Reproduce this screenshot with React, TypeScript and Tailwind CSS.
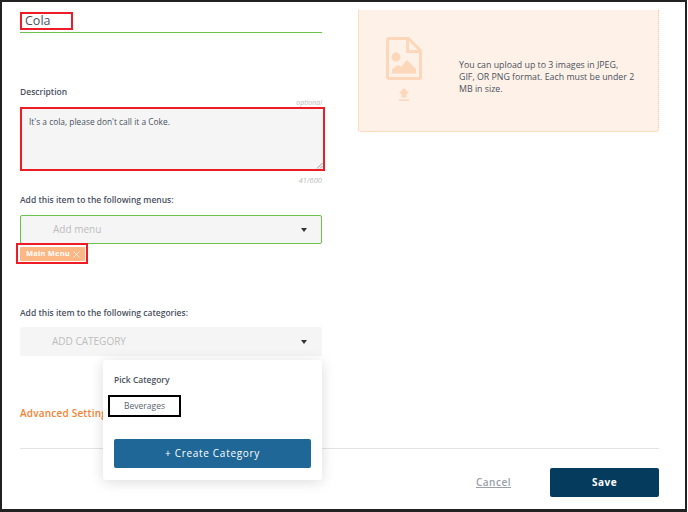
export default function App() {
  return (
    <div className="relative h-[512px] w-[688px] overflow-hidden bg-white font-['Open_Sans',sans-serif] text-[#4a5160]">
      <div className="h-[512px] w-[687px] border-x-2 border-b-[3px] border-t-2 border-[#222]">
        <div className="flex gap-[36px] pl-[18px]">
          {/* left column */}
          <div className="flex w-[302px] flex-col">
            <div className="mt-[10px] h-[21px] border-b border-[#6cc24a]">
              <div className="h-[18px] w-[53px] border-2 border-[#ee1c25] pl-[3px] text-[12.5px] leading-[14px]">Cola</div>
            </div>
            <div className="mt-[53px] text-[8.5px] font-semibold leading-[12px]">Description</div>
            <div className="text-right text-[7px] italic leading-[9px] text-[#bbb]">optional</div>
            <div className="relative h-[64px] w-[305px] border-2 border-[#ee1c25] bg-[#f5f5f5] px-[7px] py-[6px] text-[8.4px] leading-[14px]">
              It's a cola, please don't call it a Coke.
              <svg className="absolute bottom-0 right-0 h-[7px] w-[7px]" viewBox="0 0 7 7" stroke="#777" strokeWidth="0.7">
                <path d="M1 6.5 6.5 1M4 6.5 6.5 4" />
              </svg>
            </div>
            <div className="mt-[5px] text-right text-[7.5px] italic leading-[9px] text-[#bbb]">41/600</div>
            <div className="mt-[8px] text-[8.5px] font-semibold leading-[14px]">Add this item to the following menus:</div>
            <div className="mt-[8px] flex h-[29px] items-center justify-between rounded-[2px] border border-[#6cc24a] bg-[#f5f5f5] pl-[32px] pr-[14px] text-[10px] text-[#bdbdbd]">
              <span>Add menu</span>
              <Caret />
            </div>
            <div className="relative mt-[3px] flex h-[14px] w-[65px] items-center justify-between rounded-[1px] bg-[#fdb784] pl-[6px] pr-[5px] text-[7.5px] font-bold tracking-[0.2px] text-white">
              <span>Main Menu</span>
              <svg className="h-[7px] w-[7px]" viewBox="0 0 7 7" stroke="white" strokeWidth="0.8" fill="none">
                <path d="M0.5 0.5 6.5 6.5M6.5 0.5 0.5 6.5" />
              </svg>
              <div className="absolute -left-[4px] -top-[4px] h-[21px] w-[72px] border-2 border-[#ee1c25]" />
            </div>
            <div className="mt-[45px] text-[8.5px] font-semibold leading-[14px]">Add this item to the following categories:</div>
            <div className="mt-[7px] flex h-[29px] items-center justify-between rounded-[2px] bg-[#f5f5f5] pl-[32px] pr-[15px] text-[10px] text-[#bdbdbd]">
              <span>ADD CATEGORY</span>
              <Caret />
            </div>
            <div className="mt-[50px] text-[10px] font-semibold leading-[14px] tracking-[0.2px] text-[#f58233]">Advanced Settings</div>
          </div>
          {/* right column */}
          <div className="mt-[8px] flex h-[122px] w-[301px] items-center rounded-b-[3px] border-x border-b border-dotted border-[#fcc99c] bg-[#fef1e8] pl-[27px]">
            <div className="mb-[4px] flex w-[36px] flex-col items-center">
              <svg className="h-[43px] w-[36px]" viewBox="0 0 36 43" fill="#fdd7b9">
                <path fillRule="evenodd" d="M3 0H23L36 13V40a3 3 0 0 1-3 3H3a3 3 0 0 1-3-3V3a3 3 0 0 1 3-3ZM3 3V40H33V16H20V3ZM23 4V13H32Z" />
                <circle cx="10" cy="20" r="4.5" />
                <path d="M6 36.5V32L12 28 15 30 21 23 30 32V36.5Z" />
              </svg>
              <svg className="mt-[8px] h-[13px] w-[10px]" viewBox="0 0 10 13" fill="#fdd7b9">
                <path d="M5 0 10 5.5H7.5V9.5H2.5V5.5H0ZM0 11.5H10V13H0Z" />
              </svg>
            </div>
            <p className="ml-[37px] mt-[12px] whitespace-nowrap text-[8.8px] leading-[12px]">
              You can upload up to 3 images in JPEG,
              <br />
              GIF, OR PNG format. Each must be under 2
              <br />
              MB in size.
            </p>
          </div>
        </div>
        <div className="ml-[18px] mt-[28px] w-[639px] border-t border-[#e3e3e3]" />
        <div className="mr-[26px] mt-[19px] flex items-center justify-end">
          <span className="mr-[39px] text-[10px] font-semibold tracking-[0.5px] text-[#9a9fa8] underline">Cancel</span>
          <div className="flex h-[29px] w-[109px] items-center justify-center rounded-[2px] bg-[#053c5e] text-[10px] font-bold tracking-[0.5px] text-white">Save</div>
        </div>
      </div>
      {/* popup */}
      <div className="absolute left-[103px] top-[360px] h-[120px] w-[219px] rounded-[3px] bg-white shadow-[0_2px_14px_rgba(0,0,0,0.14)]">
        <div className="ml-[11px] mt-[13px] text-[8.5px] font-semibold leading-[14px]">Pick Category</div>
        <div className="ml-[5px] mt-[8px] flex h-[22px] w-[73px] items-center justify-center border-2 border-black text-[8.5px] text-[#5d6470]">Beverages</div>
        <div className="ml-[11px] mt-[22px] flex h-[29px] w-[197px] items-center justify-center rounded-[2px] bg-[#1f6797] text-[10px] font-medium tracking-[0.7px] text-white">+ Create Category</div>
      </div>
    </div>
  );
}

function Caret() {
  return <span className="mt-[1px] h-0 w-0 border-x-[3.5px] border-t-[4px] border-x-transparent border-t-[#333]" />;
}
